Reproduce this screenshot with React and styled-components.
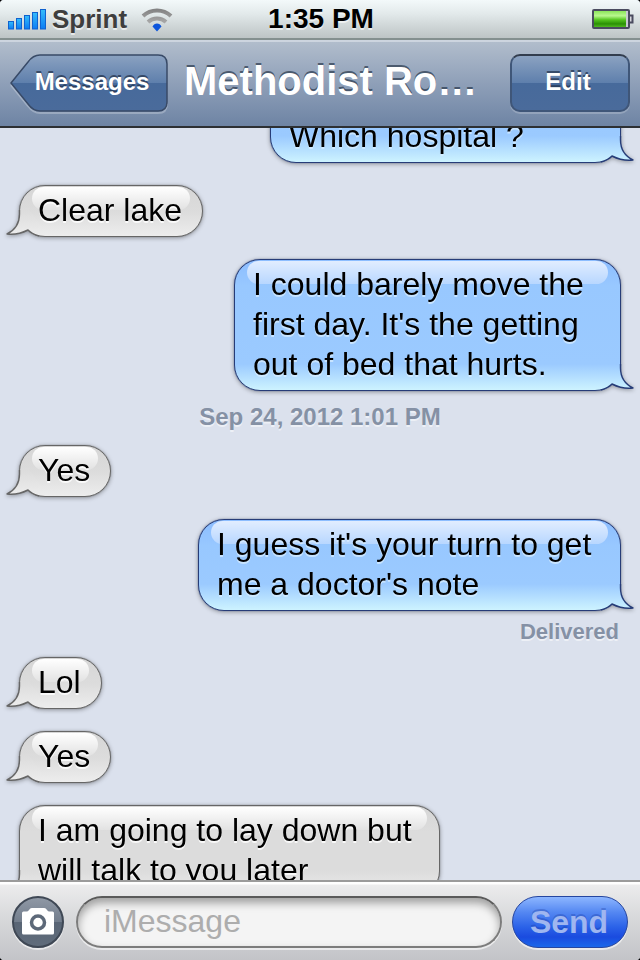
import React, { useLayoutEffect, useRef, useState } from 'react';
import styled, { createGlobalStyle, css } from 'styled-components';

const font = '"Liberation Sans", Arial, Helvetica, sans-serif';

const GlobalStyle = createGlobalStyle`
  * {
    box-sizing: border-box;
  }

  body {
    margin: 0;
    background: #000;
    font-family: ${font};
  }
`;

const Phone = styled.div`
  display: flex;
  flex-direction: column;
  height: 100vh;
  overflow: hidden;
  border-radius: 4px;
  background: #dbe1ed;
`;

const StatusBar = styled.header`
  flex: none;
  display: grid;
  grid-template-columns: 1fr auto 1fr;
  align-items: center;
  height: 40px;
  padding: 0 6px 0 8px;
  border-bottom: 2px solid #84908f;
  background: linear-gradient(#f3f9fa, #e3eaeb 35%, #bdc4c5);
  font-size: 26px;
  font-weight: bold;
  text-shadow: 0 2px 0 rgba(255, 255, 255, .6);
`;

const Carrier = styled.div`
  display: flex;
  align-items: center;
  gap: 6px;
  color: #3e3e3e;

  span {
    margin-right: 8px;
  }
`;

const Clock = styled.time`
  color: #000;
  font-size: 28px;
`;

const Battery = styled.svg`
  justify-self: end;
`;

const NavBar = styled.nav`
  flex: none;
  display: flex;
  align-items: center;
  gap: 16px;
  height: 88px;
  padding: 0 10px 2px;
  border-top: 2px solid #cdd5df;
  border-bottom: 2px solid #2d3033;
  background: linear-gradient(#b1bdcc, #8e9fb8 50%, #6e84a4);
`;

const Title = styled.h1`
  flex: 1;
  margin: 0;
  padding-bottom: 4px;
  color: #fff;
  font-size: 40px;
  line-height: 48px;
  text-shadow: 0 -2px 0 rgba(40, 55, 75, .7);
  white-space: nowrap;
`;

const navFace = 'linear-gradient(#8ba2c1, #5e7fac 50%, #476a9b 50%, #4a6b9b)';

const navButton = css`
  height: 58px;
  color: #fff;
  font: bold 24px/52px ${font};
  text-shadow: 0 -2px 0 rgba(30, 45, 70, .7);
`;

const EditButton = styled.button`
  ${navButton}
  width: 120px;
  padding: 0 4px 2px 0;
  border: 2px solid #3f5678;
  border-top-color: #323d4e;
  border-radius: 10px;
  background: ${navFace};
  box-shadow: 0 2px 0 rgba(255, 255, 255, .2);
`;

const BackButton = styled.button`
  ${navButton}
  position: relative;
  width: 158px;
  padding: 0 0 2px 6px;
  border: none;
  background: none;

  svg {
    position: absolute;
    inset: 0;
    overflow: visible;
  }

  span {
    position: relative;
  }
`;

const Thread = styled.main`
  flex: 1;
  min-height: 0;
  overflow-y: auto;
  scrollbar-width: none;
  font-size: 32px;
  line-height: 40px;
`;

const Row = styled.div`
  display: flex;
  justify-content: ${p => (p.$mine ? 'flex-end' : 'flex-start')};
  padding: 11px 19px;
`;

const skins = {
  mine: css`
    border: 1px solid #263c78;
    background: linear-gradient(#8cbdff, #98c8ff 26px, #9bcaff calc(100% - 26px), #cdf3ff);
    box-shadow: 0 0 1px #263c78;
    text-shadow: 0 2px 0 rgba(220, 240, 255, .7);
  `,
  theirs: css`
    border: 1px solid #666;
    background: linear-gradient(#d6d6d6, #dcdcdc 26px, #dcdcdc calc(100% - 26px), #ededed);
    box-shadow: 0 0 1px #666;
    text-shadow: 0 2px 0 rgba(255, 255, 255, .8);
  `,
};

const Bubble = styled.div`
  position: relative;
  min-width: ${p => p.$minWidth || 0}px;
  padding: 4px 20px 6px 18px;
  border-radius: 26px;
  color: #000;
  white-space: pre-line;
  filter: drop-shadow(0 1px 2px rgba(0, 0, 0, .35));
  ${p => (p.$mine ? skins.mine : skins.theirs)}

  &::before {
    content: '';
    position: absolute;
    top: 1px;
    left: 12px;
    right: 12px;
    height: 23px;
    border-radius: 14px;
    background: ${p => (p.$mine
      ? 'linear-gradient(#e1edff, #b8d7ff)'
      : 'linear-gradient(#fff, #e2e2e2)')};
  }

  p {
    position: relative;
    margin: 0;
  }
`;

const TailSvg = styled.svg`
  position: absolute;
  bottom: -1px;
  ${p => (p.$mine ? 'right: -14px; transform: scaleX(-1);' : 'left: -14px;')}
`;

const Stamp = styled.div`
  padding: 1px 0 3px;
  color: #8591a5;
  font-size: 24px;
  font-weight: bold;
  line-height: 28px;
  text-align: center;
  text-shadow: 0 2px 0 rgba(255, 255, 255, .5);
`;

const Receipt = styled(Stamp)`
  padding: 0 21px 4px;
  font-size: 22px;
  line-height: 20px;
  text-align: right;
`;

const Composer = styled.form`
  flex: none;
  display: flex;
  align-items: center;
  gap: 10px;
  height: 80px;
  padding: 2px 12px 0;
  border-top: 2px solid #9b9b9b;
  background: linear-gradient(#fff 2px, #ececed 3px, #d8d9db 45%, #c3c4c8);
`;

const CameraButton = styled.button`
  flex: none;
  width: 52px;
  height: 52px;
  padding: 0 0 2px;
  border: 2px solid #3f4855;
  border-radius: 50%;
  background: linear-gradient(#8f98a5, #727d8c 50%, #596575 50%, #606c7b);
  box-shadow: 0 2px 0 rgba(255, 255, 255, .6);

  svg {
    display: block;
    margin: auto;
  }
`;

const MessageInput = styled.input`
  flex: 1;
  min-width: 0;
  height: 52px;
  margin-left: 2px;
  padding: 0 26px 2px;
  border: 2px solid #7c7c7c;
  border-top-color: #5a5a5a;
  border-radius: 26px;
  background: #f4f4f4;
  box-shadow: inset 0 5px 8px rgba(0, 0, 0, .35), 0 2px 0 rgba(255, 255, 255, .6);
  font: 32px ${font};

  &::placeholder {
    color: #adadad;
    opacity: 1;
  }
`;

const SendButton = styled.button`
  flex: none;
  width: 116px;
  height: 52px;
  padding: 0 2px 0 0;
  border: 1px solid #2646a0;
  border-radius: 26px;
  background: linear-gradient(#8db6ff, #5588f2 30%, #2b62e8 60%, #1a4bdf 80%, #1a67ea);
  box-shadow: 0 2px 0 rgba(255, 255, 255, .6);
  color: #9fb6f0;
  font: bold 32px ${font};
  text-shadow: 0 -2px 0 rgba(20, 50, 150, .3);
`;

const bars = [8, 11, 14, 17, 20];

const Signal = () => (
  <svg width="38" height="22" viewBox="0 0 38 22" aria-hidden="true">
    <defs>
      <linearGradient id="bar" x1="0" y1="0" x2="0" y2="1">
        <stop offset="0" stopColor="#34bdfb" />
        <stop offset="1" stopColor="#0c7cf3" />
      </linearGradient>
    </defs>
    {bars.map((h, i) => (
      <rect key={h} x={i * 8 + 0.5} y={21.5 - h} width="5" height={h - 0.5} fill="url(#bar)" stroke="#0f62cf" />
    ))}
  </svg>
);

const Wifi = () => (
  <svg width="32" height="26" viewBox="0 0 32 26" fill="none" aria-hidden="true">
    <defs>
      <linearGradient id="wave" gradientUnits="userSpaceOnUse" x1="0" y1="2" x2="0" y2="20">
        <stop offset="0" stopColor="#7f7f7f" />
        <stop offset="1" stopColor="#b2b2b2" />
      </linearGradient>
    </defs>
    <path d="M2 10 A20.500 20.500 0 0 1 30 10" stroke="url(#wave)" strokeWidth="4" />
    <path d="M7 16 A13.500 13.500 0 0 1 25 16" stroke="url(#wave)" strokeWidth="4" />
    <path d="M11.500 20.500 Q13 17.500 16 17.500 Q19 17.500 20.500 20.500 L16 25.500 Z" fill="#0c55dc" />
  </svg>
);

const BatteryIcon = () => (
  <Battery width="42" height="20" viewBox="0 0 42 20" role="img" aria-label="Battery full">
    <defs>
      <linearGradient id="charge" x1="0" y1="0" x2="0" y2="1">
        <stop offset="0" stopColor="#8be55a" />
        <stop offset=".3" stopColor="#b9f78f" />
        <stop offset=".55" stopColor="#55c51f" />
        <stop offset=".8" stopColor="#2b9005" />
        <stop offset="1" stopColor="#4fb820" />
      </linearGradient>
    </defs>
    <rect x="1" y="1" width="36" height="18" rx="1" fill="#c9c9d2" stroke="#4a4b5f" strokeWidth="2" />
    <rect x="2" y="2" width="32" height="16" fill="url(#charge)" />
    <path d="M38 6.500 h2.500 v7 h-2.500" fill="#d8d8de" stroke="#4a4b5f" strokeWidth="2" />
  </Battery>
);

const BackShape = () => (
  <svg width="158" height="58" viewBox="0 0 158 58" aria-hidden="true">
    <defs>
      <linearGradient id="back" x1="0" y1="0" x2="0" y2="1">
        <stop offset="0" stopColor="#8ba2c1" />
        <stop offset=".5" stopColor="#5e7fac" />
        <stop offset=".5" stopColor="#476a9b" />
        <stop offset="1" stopColor="#4a6b9b" />
      </linearGradient>
    </defs>
    <path
      d="M1 31 L18 52 Q23 59 30 59 H148 Q157 59 157 50"
      fill="none"
      stroke="#fff"
      strokeOpacity=".25"
      strokeWidth="2"
    />
    <path
      d="M1 29 L18 8 Q23 1 30 1 H148 Q157 1 157 10 V48 Q157 57 148 57 H30 Q23 57 18 50 Z"
      fill="url(#back)"
      stroke="#384a67"
      strokeWidth="1.500"
      strokeLinejoin="round"
    />
  </svg>
);

const Tail = ({ mine }) => {
  const id = mine ? 'tail-mine' : 'tail-theirs';
  return (
    <TailSvg $mine={mine} width="40" height="34" viewBox="0 0 40 34" aria-hidden="true">
      <defs>
        <linearGradient id={id} gradientUnits="userSpaceOnUse" x1="0" y1="7" x2="0" y2="33">
          <stop offset="0" stopColor={mine ? '#9bcaff' : '#dcdcdc'} />
          <stop offset="1" stopColor={mine ? '#cdf3ff' : '#ededed'} />
        </linearGradient>
      </defs>
      <path
        d="M13.500 7 V11 C13.500 20 9 27 1 31 C9 32 16 30 22 27 Q26 31 32 32.500 L36 24 L22 5 Z"
        fill={`url(#${id})`}
      />
      <path
        d="M13.500 7 V11 C13.500 20 9 27 1 31 C9 32 16 30 22 27 Q26 31 33 33"
        fill="none"
        stroke={mine ? '#263c78' : '#666'}
        strokeWidth="1.400"
        strokeLinejoin="round"
      />
    </TailSvg>
  );
};

const CameraIcon = () => (
  <svg width="32" height="28" viewBox="0 0 32 28" aria-hidden="true">
    <path
      d="M1.500 4.500 H4.500 Q6 4.500 7 3 L8 1.800 Q8.600 1 10 1 H22 Q23.400 1 24 1.800 L25 3 Q26 4.500 27.500 4.500 H30.500 Q32 4.500 32 6 V26 Q32 27.500 30.500 27.500 H1.500 Q0 27.500 0 26 V6 Q0 4.500 1.500 4.500 Z"
      fill="#fff"
    />
    <circle cx="16" cy="15.500" r="6.500" fill="#fff" stroke="#5d6979" strokeWidth="3.500" />
  </svg>
);

const messages = [
  { mine: true, text: '\nWhich hospital ?', minWidth: 351 },
  { text: 'Clear lake' },
  { mine: true, text: 'I could barely move the\nfirst day. It\'s the getting\nout of bed that hurts.', minWidth: 387 },
  { stamp: 'Sep 24, 2012 1:01 PM' },
  { text: 'Yes' },
  { mine: true, text: 'I guess it\'s your turn to get\nme a doctor\'s note', minWidth: 423 },
  { receipt: 'Delivered' },
  { text: 'Lol' },
  { text: 'Yes' },
  { text: 'I am going to lay down but\nwill talk to you later', minWidth: 421 },
];

const Entry = ({ mine, text, minWidth, stamp, receipt }) => {
  if (stamp) return <Stamp>{stamp}</Stamp>;
  if (receipt) return <Receipt>{receipt}</Receipt>;
  return (
    <Row $mine={mine}>
      <Bubble $mine={mine} $minWidth={minWidth}>
        <Tail mine={mine} />
        <p>{text}</p>
      </Bubble>
    </Row>
  );
};

const App = () => {
  const thread = useRef(null);
  const [draft, setDraft] = useState('');

  useLayoutEffect(() => {
    thread.current.scrollTop = 68;
  }, []);

  return (
    <Phone>
      <GlobalStyle />
      <StatusBar>
        <Carrier>
          <Signal />
          <span>Sprint</span>
          <Wifi />
        </Carrier>
        <Clock>1:35 PM</Clock>
        <BatteryIcon />
      </StatusBar>
      <NavBar>
        <BackButton type="button">
          <BackShape />
          <span>Messages</span>
        </BackButton>
        <Title>Methodist Ro…</Title>
        <EditButton type="button">Edit</EditButton>
      </NavBar>
      <Thread ref={thread}>
        {messages.map((m, i) => <Entry key={i} {...m} />)}
      </Thread>
      <Composer onSubmit={e => e.preventDefault()}>
        <CameraButton type="button" aria-label="Attach photo"><CameraIcon /></CameraButton>
        <MessageInput
          aria-label="Message"
          placeholder="iMessage"
          value={draft}
          onChange={e => setDraft(e.target.value)}
        />
        <SendButton type="submit">Send</SendButton>
      </Composer>
    </Phone>
  );
};

export default App;
